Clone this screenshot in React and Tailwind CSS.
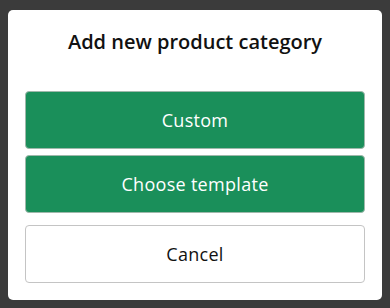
export default function App() {
  const font = { fontFamily: '"Open Sans", sans-serif' }
  return (
    <div className="w-[390px] h-[308px] bg-[#3b3b3b] pt-[10px] px-[8px]" style={font}>
      <div className="bg-white rounded-[5px] px-[17px] pt-[19px] pb-[17px]">
        <h2 className="text-center text-[20px] leading-[26px] font-semibold text-[#111] mb-[36px]">
          Add new product category
        </h2>
        <div className="flex flex-col">
          <button className="h-[58px] rounded-[4px] bg-[#1a8f5a] border border-[#9fb8ab] text-white text-[18px] tracking-[0.3px] pt-[1px]">
            Custom
          </button>
          <button className="h-[58px] mt-[6px] rounded-[4px] bg-[#1a8f5a] border border-[#9fb8ab] text-white text-[18px] tracking-[0.3px] pt-[1px]">
            Choose template
          </button>
          <button className="h-[58px] mt-[12px] rounded-[4px] bg-white border border-[#c4c4c4] text-[#111] text-[18px] tracking-[0.3px] pt-[1px]">
            Cancel
          </button>
        </div>
      </div>
    </div>
  )
}
